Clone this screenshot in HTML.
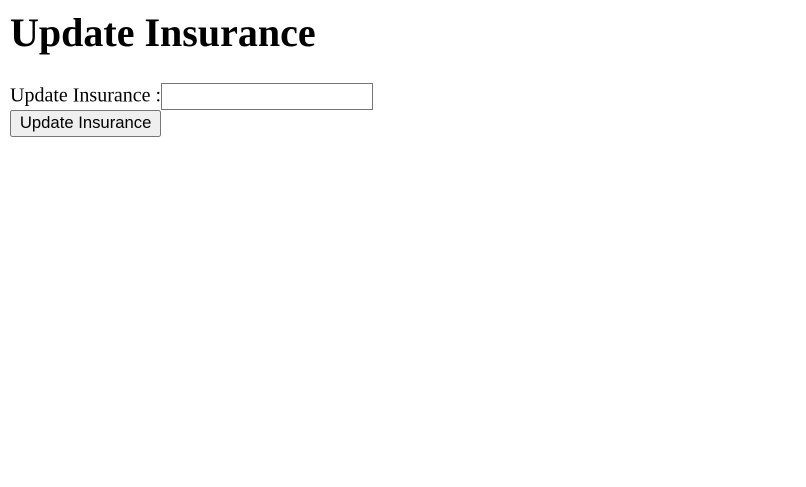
<!DOCTYPE html>
<html style="zoom:1.25"><head><style>
body{margin:8px;font-family:"Liberation Serif",serif;font-size:16px;background:#fff;color:#000}
h1{font-size:32px;margin:21px 0;line-height:37px;margin-top:8px}
input[type=text]{width:164px;height:18px;border:1px solid #767676;padding:1px 2px;box-sizing:content-box;margin:0;vertical-align:baseline}
button{font-family:"Liberation Sans",sans-serif;font-size:13.33px;padding:1px 6px;border:1px solid #767676;background:#efefef;border-radius:2px;height:22px;width:121px;margin:0}
</style></head><body>
<h1>Update Insurance</h1>
<div>Update Insurance :<input type="text"></div>
<button>Update Insurance</button>
</body></html>
